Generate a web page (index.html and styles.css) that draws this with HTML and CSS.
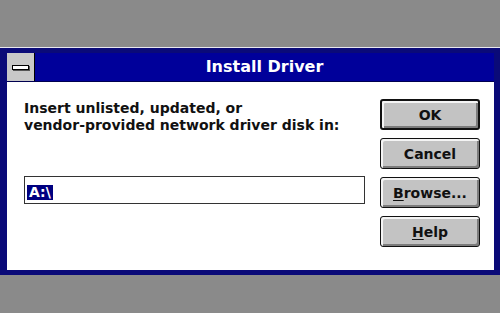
FILE: index.html
```html
<!DOCTYPE html>
<html lang="en">
<head>
  <meta charset="UTF-8">
  <title>Install Driver</title>
  <link rel="stylesheet" href="styles.css">
</head>
<body>
  <div class="window">
    <!-- title bar -->
    <div class="titlebar">
      <div class="sysmenu"><span class="dash"></span></div>
      <div class="title">Install Driver</div>
    </div>

    <!-- dialog body -->
    <div class="client">
      <div class="left">
        <p class="prompt">Insert unlisted, updated, or<br>vendor-provided network driver disk in:</p>
        <div class="field"><span class="sel">A:\</span></div>
      </div>
      <div class="buttons">
        <button class="btn default">OK</button>
        <button class="btn">Cancel</button>
        <button class="btn"><u>B</u>rowse...</button>
        <button class="btn"><u>H</u>elp</button>
      </div>
    </div>
  </div>
</body>
</html>
```

FILE: styles.css
```css
* {
  box-sizing: border-box;
}
body {
  margin: 0;
  background-color: #8a8a8a;
  font-family: "DejaVu Sans", "Liberation Sans", sans-serif;
  font-weight: bold;
}

/* window frame */
.window {
  margin-top: 47px;
  border-top: 1px solid #e8e8f0;
  background-color: #0a0a78;
  padding: 5px 6px 5px 7px;
}

/* title bar */
.titlebar {
  display: flex;
  height: 29px;
  background-color: #00009a;
  border-bottom: 1px solid #000050;
}
.sysmenu {
  width: 28px;
  background-color: #c8c8c8;
  border-right: 1px solid #000;
  display: flex;
  align-items: center;
  justify-content: center;
}
.dash {
  width: 17px;
  height: 5px;
  border: 1px solid #000;
  background-color: #fff;
  box-shadow: 1px 1px 0 #555;
}
.title {
  flex: 1;
  color: #fff;
  text-align: center;
  font-size: 16px;
  line-height: 28px;
}

/* client area */
.client {
  display: flex;
  height: 188px;
  background-color: #fff;
  padding: 18px 14px 0 17px;
}
.left {
  width: 341px;
}
.prompt {
  margin: 0;
  font-size: 14px;
  line-height: 17px;
  color: #111;
}
.field {
  margin-top: 42px;
  height: 28px;
  border: 1px solid #333;
  padding: 5px 2px;
}
.sel {
  display: inline-block;
  background-color: #000080;
  color: #fff;
  font-size: 14px;
  line-height: 15px;
  padding: 0 2px;
}

/* buttons */
.buttons {
  margin-left: 15px;
  margin-top: -1px;
  display: flex;
  flex-direction: column;
  gap: 8px;
}
.btn {
  width: 100px;
  height: 31px;
  font-family: "DejaVu Sans", "Liberation Sans", sans-serif;
  font-weight: bold;
  font-size: 14px;
  color: #111;
  background-color: #c3c3c3;
  border: 1px solid #111;
  border-radius: 3px;
  box-shadow: inset 2px 2px 0 #f4f4f4, inset -2px -2px 0 #7c7c7c;
  padding: 0;
}
.btn.default {
  border-width: 2px;
}
.btn u {
  text-decoration-thickness: 1px;
  text-underline-offset: 2px;
}
```
